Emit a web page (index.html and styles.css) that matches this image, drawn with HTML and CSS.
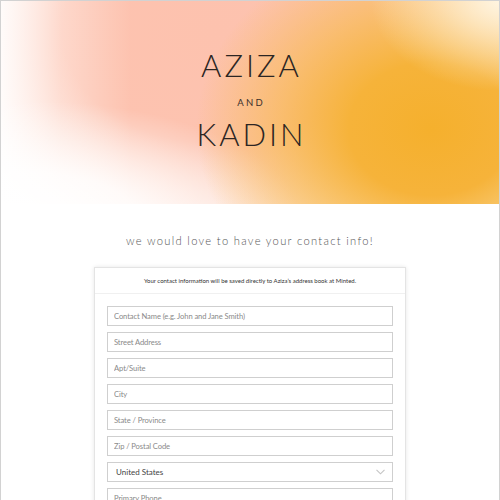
FILE: index.html
```html
<!DOCTYPE html>
<html lang="en">
<head>
<meta charset="utf-8">
<title>Aziza and Kadin</title>
<link rel="stylesheet" href="styles.css">
</head>
<body>
<div class="page">
  <header class="hero">
    <div class="name">AZIZA</div>
    <div class="and">AND</div>
    <div class="name name-second">KADIN</div>
  </header>
  <h2 class="subtitle">we would love to have your contact info!</h2>
  <section class="card">
    <p class="note">Your contact information will be saved directly to Aziza’s address book at Minted.</p>
    <form class="fields">
      <input class="field" type="text" placeholder="Contact Name (e.g. John and Jane Smith)">
      <input class="field" type="text" placeholder="Street Address">
      <input class="field" type="text" placeholder="Apt/Suite">
      <input class="field" type="text" placeholder="City">
      <input class="field" type="text" placeholder="State / Province">
      <input class="field" type="text" placeholder="Zip / Postal Code">
      <div class="select">
        <span class="select-value">United States</span>
        <svg class="chevron" width="9" height="6" viewBox="0 0 9 6"><path d="M0.5 0.8 L4.5 4.8 L8.5 0.8" fill="none" stroke="#c4c4c4" stroke-width="1.1"/></svg>
      </div>
      <input class="field" type="text" placeholder="Primary Phone">
    </form>
  </section>
</div>
</body>
</html>
```

FILE: styles.css
```css
* { box-sizing: border-box; }
html, body { margin: 0; padding: 0; background: #fff; }
body { font-family: "Lato", "Liberation Sans", sans-serif; }

.page {
  width: 500px;
  height: 500px;
  overflow: hidden;
  border: 1px solid #d2d2d2;
  border-bottom: none;
}

.hero {
  height: 203px;
  display: flex;
  flex-direction: column;
  align-items: center;
  padding-top: 49px;
  background:
    radial-gradient(ellipse 130px 90px at 500px 0px, rgba(255,246,228,0.95) 0%, rgba(255,240,215,0.5) 50%, rgba(255,240,215,0) 100%),
    radial-gradient(ellipse 235px 190px at 430px 128px, #f5b02d 0%, #f6b33a 35%, rgba(247,185,70,0.6) 65%, rgba(248,190,90,0) 100%),
    radial-gradient(ellipse 270px 120px at 30px 220px, #fff 0%, rgba(255,255,255,0.85) 40%, rgba(255,255,255,0) 100%),
    linear-gradient(90deg, rgba(255,255,255,0.9) 0px, rgba(255,255,255,0.35) 60px, rgba(255,255,255,0) 130px),
    radial-gradient(ellipse 340px 250px at 215px 30px, #fdc2ae 0%, #fdc3b0 45%, rgba(253,200,180,0.5) 75%, rgba(253,205,190,0) 100%),
    #fff;
}

.name {
  font-size: 31px;
  line-height: 31px;
  font-weight: 300;
  letter-spacing: 3px;
  color: #2b2523;
  padding-left: 3px;
}
.name-second { margin-top: 12px; }

.and {
  margin-top: 17px;
  font-size: 9.5px;
  line-height: 9px;
  font-weight: 400;
  letter-spacing: 2.2px;
  color: #3a302c;
  padding-left: 2.2px;
}

.subtitle {
  margin: 29px 0 0;
  text-align: center;
  font-size: 11.2px;
  line-height: 16px;
  font-weight: 300;
  letter-spacing: 1.3px;
  color: #555;
}

.card {
  width: 312px;
  margin: 18px auto 0;
  border: 1px solid #e4e4e4;
  box-shadow: 0 0 4px rgba(0,0,0,0.10);
  background: #fff;
}

.note {
  margin: 0;
  height: 26px;
  padding-top: 9px;
  text-align: center;
  font-size: 6px;
  line-height: 8px;
  color: #333;
  border-bottom: 1px solid #f0f0f0;
}

.fields {
  display: flex;
  flex-direction: column;
  gap: 6px;
  padding: 12px 12px 0;
}

.field, .select {
  width: 100%;
  height: 20px;
  border: 1px solid #cfcfcf;
  background: #fff;
  padding: 0 6px;
  font-family: "Lato", "Liberation Sans", sans-serif;
  font-size: 7.6px;
  letter-spacing: -0.1px;
  color: #555;
  outline: none;
}
.field::placeholder { color: #8a8a8a; }

.select {
  display: flex;
  align-items: center;
  justify-content: space-between;
  padding: 0 7px 0 8px;
}
.select-value { color: #444; font-size: 8px; font-weight: 400; letter-spacing: 0; }
```
